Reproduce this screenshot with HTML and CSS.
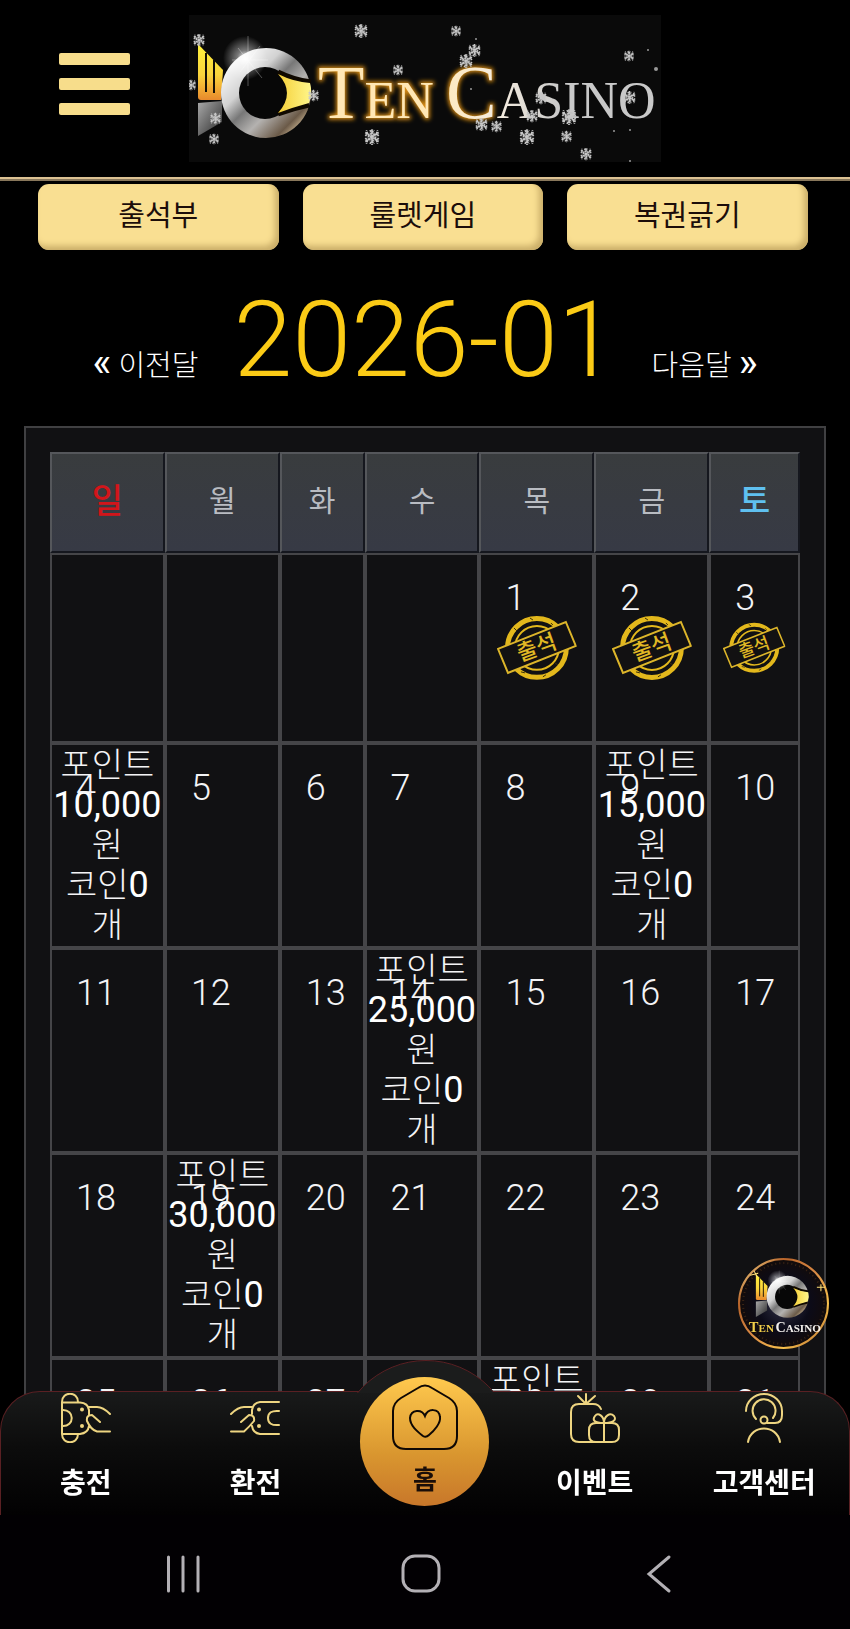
FILE: index.html
```html
<!DOCTYPE html>
<html lang="ko">
<head>
<meta charset="utf-8">
<meta name="viewport" content="width=device-width, initial-scale=1">
<title>TEN CASINO 출석부</title>
<link rel="stylesheet" href="styles.css">
</head>
<body>
<svg class="defs" aria-hidden="true">
  <defs>
    <linearGradient id="gold" x1="0" y1="0" x2="0" y2="1"><stop offset="0" stop-color="#fff23c"/><stop offset=".55" stop-color="#fbd53c"/><stop offset="1" stop-color="#e8892c"/></linearGradient>
    <linearGradient id="silver" x1="0" y1="0" x2="1" y2="1"><stop offset=".1" stop-color="#fff"/><stop offset=".35" stop-color="#d2d2d2"/><stop offset=".48" stop-color="#777"/><stop offset=".62" stop-color="#b4b2b0"/><stop offset=".8" stop-color="#6b5a48"/><stop offset=".92" stop-color="#f0d9b0"/></linearGradient>
    <linearGradient id="fin" x1="0" y1="0" x2="1" y2="1"><stop offset="0" stop-color="#aaa"/><stop offset="1" stop-color="#2a2a2a"/></linearGradient>
    <linearGradient id="eye" x1="0" y1="0" x2="1" y2="0"><stop offset="0" stop-color="#f5cf38"/><stop offset="1" stop-color="#fff68a"/></linearGradient>
    <linearGradient id="word" gradientUnits="userSpaceOnUse" x1="440" y1="0" x2="560" y2="0"><stop offset="0" stop-color="#ffe9bd"/><stop offset=".5" stop-color="#f4ece0"/><stop offset="1" stop-color="#c9c9c9"/></linearGradient>
    <radialGradient id="flare"><stop offset="0" stop-color="#fff"/><stop offset=".35" stop-color="#fff" stop-opacity=".45"/><stop offset="1" stop-color="#fff" stop-opacity="0"/></radialGradient>
    <radialGradient id="night"><stop offset="0" stop-color="#323248"/><stop offset=".6" stop-color="#0c0b18"/><stop offset="1" stop-color="#120b0a"/></radialGradient>
    <linearGradient id="rim" x1="0" y1="0" x2="1" y2="1"><stop offset="0" stop-color="#fff0a0"/><stop offset=".25" stop-color="#b8642a"/><stop offset=".5" stop-color="#d98a45"/><stop offset=".75" stop-color="#f8c04c"/><stop offset="1" stop-color="#a35528"/></linearGradient>
    <filter id="glow" x="-20%" y="-20%" width="140%" height="140%"><feGaussianBlur stdDeviation="2"/></filter>
    <symbol id="emblem" viewBox="190 36 130 110">
      <path d="M198 44L223 70L221 100H201Q198 100 198 97Z" fill="url(#gold)"/>
      <path d="M206 53V92M214 60V93" stroke="#151005" stroke-width="2"/>
      <path d="M198 103L222 101V122L198 136Z" fill="url(#fin)"/>
      <circle cx="266" cy="93" r="45" fill="url(#silver)"/>
      <circle cx="265" cy="93" r="26" fill="#070707"/>
      <path d="M278 72Q294 80 311 82M278 114Q294 108 309 105" fill="none" stroke="#100900" stroke-width="5"/>
      <path d="M278 74Q294 82 310 83Q313 94 309 103Q294 107 278 113Q296 93 278 74Z" fill="url(#eye)"/>
      <circle cx="245" cy="58" r="22" fill="url(#flare)"/>
      <path d="M248 36V86M232 60H268M238 48L262 78M260 46L240 72" stroke="#fff" stroke-width="1" opacity=".3"/>
    </symbol>
    <symbol id="flake" viewBox="-8 -8 16 16">
      <circle r="5" fill="#aaa" opacity=".3"/>
      <g fill="none" stroke="#c8c8c8" stroke-width="1.500"><path stroke-dasharray="2 .6" d="M0-7V7M-6-4L6 4M-6 4L6-4M-2-6L0-4L2-6M-2 6L0 4L2 6M-6-1L-4-3L-5-6M6 1L4 3L5 6M-6 1L-4 3L-5 6M6-1L4-3L5-6"/><circle r="3" stroke-dasharray="2 1"/></g>
    </symbol>
    <symbol id="stamp" viewBox="0 0 80 66">
      <g fill="none" stroke="#e3b81c">
        <circle cx="40" cy="33" r="29.5" stroke-width="5"/>
        <circle cx="40" cy="33" r="22" stroke-width="2"/>
        <path d="M17 13l3 3M33 3l3 2M61 50l-3-2M46 62l3-2M24 57l4 1M54 8l2 2" stroke="#3a2f0a" stroke-width="1"/>
      </g>
      <path d="M1 34L69 7L79 31L11 58Z" fill="#121112" stroke="#dcb52a" stroke-width="2"/>
      <text class="stamp-text" x="40" y="40" transform="rotate(-20 40 33)">출석</text>
    </symbol>
  </defs>
</svg>

<div class="app">
  <header class="header">
    <button class="menu" type="button" aria-label="메뉴"><span></span><span></span><span></span></button>
    <a class="logo" href="#" aria-label="TEN CASINO">
      <svg viewBox="189 15 472 147">
        <use href="#emblem" x="190" y="36" width="130" height="110"/>
        <g class="wordmark wordmark-glow" filter="url(#glow)" aria-hidden="true">
          <text x="318" y="118">T<tspan class="small">EN</tspan></text>
          <text x="446" y="118">C</text>
        </g>
        <g class="wordmark">
          <text x="318" y="118" fill="#ffe7b5">T<tspan class="small">EN</tspan></text>
          <text x="446" y="118" fill="url(#word)">C<tspan class="small">ASINO</tspan></text>
        </g>
        <g>
          <use href="#flake" x="192" y="33" width="14" height="14"/><use href="#flake" x="353" y="23" width="16" height="16"/>
          <use href="#flake" x="392" y="64" width="12" height="12"/><use href="#flake" x="307" y="89" width="13" height="13"/>
          <use href="#flake" x="185" y="79" width="12" height="12"/><use href="#flake" x="209" y="112" width="13" height="13"/>
          <use href="#flake" x="208" y="133" width="12" height="12"/><use href="#flake" x="363" y="128" width="18" height="18"/>
          <use href="#flake" x="450" y="25" width="12" height="12"/><use href="#flake" x="467" y="43" width="15" height="15"/>
          <use href="#flake" x="458" y="53" width="16" height="16"/><use href="#flake" x="534" y="91" width="14" height="14"/>
          <use href="#flake" x="525" y="109" width="14" height="14"/><use href="#flake" x="560" y="108" width="18" height="18"/>
          <use href="#flake" x="474" y="117" width="15" height="15"/><use href="#flake" x="490" y="120" width="13" height="13"/>
          <use href="#flake" x="518" y="128" width="18" height="18"/><use href="#flake" x="560" y="130" width="13" height="13"/>
          <use href="#flake" x="579" y="147" width="14" height="14"/><use href="#flake" x="623" y="50" width="12" height="12"/>
          <use href="#flake" x="622" y="90" width="15" height="15"/>
          <g fill="#999"><circle cx="648" cy="50" r="1"/><circle cx="656" cy="69" r="2"/><circle cx="614" cy="131" r="1"/><circle cx="630" cy="130" r="1"/><circle cx="476" cy="39" r="1"/><circle cx="471" cy="89" r="1"/><circle cx="630" cy="161" r="1"/></g>
        </g>
      </svg>
    </a>
  </header>

  <nav class="events">
    <button type="button">출석부</button>
    <button type="button">룰렛게임</button>
    <button type="button">복권긁기</button>
  </nav>

  <div class="month">
    <a href="#"><span class="chev">«</span> 이전달</a>
    <h1>2026-01</h1>
    <a href="#">다음달 <span class="chev">»</span></a>
  </div>

  <main class="panel">
    <table class="calendar">
      <colgroup><col><col><col class="narrow"><col><col><col><col class="last"></colgroup>
      <thead>
        <tr><th class="sun">일</th><th>월</th><th>화</th><th>수</th><th>목</th><th>금</th><th class="sat">토</th></tr>
      </thead>
      <tbody>
        <tr class="first">
          <td></td><td></td><td></td><td></td>
          <td><span class="day">1</span><svg class="stamp" viewBox="0 0 80 66"><use href="#stamp"/></svg></td>
          <td><span class="day">2</span><svg class="stamp" viewBox="0 0 80 66"><use href="#stamp"/></svg></td>
          <td><span class="day">3</span><svg class="stamp" viewBox="0 0 80 66"><use href="#stamp"/></svg></td>
        </tr>
        <tr>
          <td><span class="day">4</span><p class="reward">포인트<br><b>10,000</b><br>원<br>코인<b>0</b><br>개</p></td>
          <td><span class="day">5</span></td><td><span class="day">6</span></td><td><span class="day">7</span></td><td><span class="day">8</span></td>
          <td><span class="day">9</span><p class="reward">포인트<br><b>15,000</b><br>원<br>코인<b>0</b><br>개</p></td>
          <td><span class="day">10</span></td>
        </tr>
        <tr>
          <td><span class="day">11</span></td><td><span class="day">12</span></td><td><span class="day">13</span></td>
          <td><span class="day">14</span><p class="reward">포인트<br><b>25,000</b><br>원<br>코인<b>0</b><br>개</p></td>
          <td><span class="day">15</span></td><td><span class="day">16</span></td><td><span class="day">17</span></td>
        </tr>
        <tr>
          <td><span class="day">18</span></td>
          <td><span class="day">19</span><p class="reward">포인트<br><b>30,000</b><br>원<br>코인<b>0</b><br>개</p></td>
          <td><span class="day">20</span></td><td><span class="day">21</span></td><td><span class="day">22</span></td><td><span class="day">23</span></td><td><span class="day">24</span></td>
        </tr>
        <tr>
          <td><span class="day">25</span></td><td><span class="day">26</span></td><td><span class="day">27</span></td><td><span class="day">28</span></td>
          <td><span class="day">29</span><p class="reward">포인트</p></td>
          <td><span class="day">30</span></td><td><span class="day">31</span></td>
        </tr>
      </tbody>
    </table>
  </main>
</div>

<a class="badge" href="#" aria-label="TEN CASINO">
  <svg viewBox="0 0 90 90">
    <circle cx="45" cy="45" r="44" fill="url(#night)" stroke="url(#rim)" stroke-width="2"/>
    <circle cx="45" cy="45" r="40" fill="none" stroke="#7a4a20" stroke-width="2" stroke-dasharray="1 3" opacity=".4"/>
    <use href="#emblem" x="14" y="12" width="60" height="51"/>
    <path d="M82 26v7M78 29h8M16 13l3 6M12 17l8-2" stroke="#ffe27a" stroke-width="1"/>
    <text class="badge-text" x="11" y="73" fill="#f2cf4a">T<tspan class="badge-small">EN</tspan></text>
    <text class="badge-text" x="37" y="73" fill="#f4f1ee">C<tspan class="badge-small">ASINO</tspan></text>
  </svg>
</a>

<footer class="bottom">
  <nav class="tabs">
    <span class="hump"></span>
    <a href="#">
      <svg class="icon" viewBox="0 0 50 50"><path d="M1 9V41M1 9C1-2 17-2 17 9M1 41C1 52 17 52 17 41M1 9.500H19Q27 10 28 17V22M1 41H19Q27 40 28 33M1 17C14 16 14 34 1 33M28 14H36Q42 14 49 21M39 29L31 22Q25 22 26 28Q30 37 36 38.500H49"/><g class="dots"><circle cx="21" cy="16.500" r="2"/><circle cx="21" cy="33" r="2"/></g></svg>
      <span>충전</span>
    </a>
    <a href="#">
      <svg class="icon" viewBox="0 0 50 50"><path d="M49 9H30Q23 10 22 17V21M49 41H30Q23 40 22 33M49 18Q38 17 38 25Q38 33 49 32M1 21Q8 14 14 14H22M11 29L19 22Q25 22 24 28Q20 33 14 38.500H1"/><g class="dots"><circle cx="29" cy="16.500" r="2"/><circle cx="29" cy="33" r="2"/></g></svg>
      <span>환전</span>
    </a>
    <a class="home" href="#">
      <svg class="home-icon" viewBox="0 0 66 66"><path d="M26 4L9 14Q1 19 1 27V52Q1 65 14 65H52Q65 65 65 52V27Q65 19 57 14L40 4Q33-1 26 4Z"/><path d="M33 32C30 25 19 25 18 34C18 42 26 48 31 52Q34 54 37 51C42 47 49 39 48 33C47 24 36 24 33 32Z"/></svg>
      <span>홈</span>
    </a>
    <a href="#">
      <svg class="icon" viewBox="0 0 50 50"><path d="M31 16Q29 11 23 11H9Q1 11 1 19V41Q1 49 9 49H42Q49 49 49 42V37Q49 30 42 30H26Q19 30 19 37V42Q19 49 26 49M16 1V11M8 3L16 11L25 3M34 30V49M34 30C24 30 22 27 25 23C28 19 34 23 34 30C34 23 40 19 44 23C47 27 43 30 34 30"/></svg>
      <span>이벤트</span>
    </a>
    <a href="#">
      <svg class="icon" viewBox="0 0 50 50"><path d="M7 18A18 17 0 0 1 43 18V22Q43 30 36 30H28M17 26A11.500 11.500 0 1 1 34 25M9 49C12 31 38 31 41 49"/><circle cx="25" cy="27" r="3.500"/></svg>
      <span>고객센터</span>
    </a>
  </nav>
  <div class="system">
    <button type="button" aria-label="최근 앱"><svg viewBox="0 0 40 40"><path d="M3.500 3V37M18 3V37M33 3V37"/></svg></button>
    <button type="button" aria-label="홈"><svg viewBox="0 0 40 40"><rect x="2" y="2" width="36" height="35" rx="12"/></svg></button>
    <button type="button" aria-label="뒤로"><svg viewBox="0 0 40 40"><path d="M32 3L12 20L32 37"/></svg></button>
  </div>
</footer>
</body>
</html>
```
FILE: styles.css
```css
* {
  box-sizing: border-box;
}

body {
  margin: 0;
  background: #000;
  color: #f4f4f6;
  font-family: Roboto, "Noto Sans CJK KR", sans-serif;
  font-weight: 300;
}

a {
  color: inherit;
  text-decoration: none;
}

button {
  padding: 0;
  border: 0;
  background: none;
  color: inherit;
  font: inherit;
}

svg {
  display: block;
}

.defs {
  position: absolute;
  width: 0;
  height: 0;
}

.app {
  height: 100vh;
  overflow: hidden;
}

/* Header */
.header {
  display: flex;
  align-items: flex-start;
  gap: 59px;
  padding: 15px 59px;
  border-bottom: 4px ridge #dcc193;
}

.menu {
  display: flex;
  flex-direction: column;
  gap: 13px;
  width: 71px;
  margin-top: 38px;
}

.menu span {
  height: 12px;
  border-radius: 2px;
  background: #f7dd8b;
}

.logo {
  width: 472px;
  background: #0a0a0a;
}

.logo svg {
  width: 100%;
}

.wordmark {
  font-family: "Liberation Serif", serif;
  font-size: 76px;
  font-weight: 400;
}

.wordmark .small {
  font-size: 52px;
}

.wordmark-glow {
  fill: #d98d12;
  stroke: #d98d12;
  stroke-width: 3px;
}

/* Event buttons */
.events {
  display: grid;
  grid-template-columns: repeat(3, 1fr);
  gap: 24px;
  padding: 3px 5% 0 38px;
}

.events button {
  height: 66px;
  padding-bottom: 8px;
  border-radius: 11px;
  background: #f9df92;
  box-shadow: inset -4px -4px 6px #c9ad68;
  color: #1c0d0a;
  font-size: 29px;
  font-weight: 400;
}

/* Month switcher */
.month {
  display: flex;
  justify-content: center;
  align-items: baseline;
  gap: 35px;
  height: 176px;
  padding-top: 30px;
  color: #fff;
  font-size: 29px;
}

.month h1 {
  margin: 0;
  color: #fbcb16;
  font-size: 106px;
  font-weight: 300;
  line-height: 120px;
}

.chev {
  font-weight: 400;
  font-size: 40px;
  line-height: 40px;
}

/* Calendar */
.panel {
  margin: 0 24px;
  padding: 24px;
  border: 2px solid #404042;
  background: #111113;
}

.calendar {
  width: 100%;
  table-layout: fixed;
  border-collapse: separate;
  border-spacing: 0;
}

.calendar .narrow {
  width: 11.3%;
}

.calendar .last {
  width: 12.1%;
}

.calendar th {
  height: 101px;
  padding: 0 0 8px;
  border: 2px solid #55575b;
  border-right-color: #15171e;
  border-bottom-color: #15171e;
  background: linear-gradient(#393c3e, #373a45);
  color: #b9bcc2;
  font-size: 29px;
  font-weight: 400;
}

.calendar .sun {
  color: #d3151a;
  font-size: 34px;
  font-weight: 500;
}

.calendar .sat {
  color: #5fc0f0;
  font-size: 34px;
  font-weight: 500;
}

.calendar td {
  position: relative;
  height: 205px;
  padding: 0;
  border: 2px solid #454548;
  vertical-align: top;
}

.calendar .first td {
  height: 190px;
  vertical-align: middle;
}

.day {
  position: absolute;
  top: 23px;
  left: 24px;
  font-size: 36px;
  line-height: 40px;
}

.stamp {
  width: 72%;
  margin: 0 auto;
}

.stamp-text {
  fill: #e0b824;
  font-size: 22px;
  font-weight: 500;
  text-anchor: middle;
}

.reward {
  margin: 0;
  font-size: 34px;
  line-height: 40px;
  text-align: center;
}

.reward b {
  color: #fff;
  font-size: 36px;
  font-weight: 400;
  line-height: 36px;
}

/* Floating badge */
.badge {
  position: fixed;
  right: 21px;
  bottom: 280px;
  width: 91px;
}

.badge-text {
  font-family: "Liberation Serif", serif;
  font-size: 14px;
  font-weight: 700;
}

.badge-small {
  font-size: 11px;
}

/* Bottom bars */
.bottom {
  position: fixed;
  right: 0;
  bottom: 0;
  left: 0;
}

.tabs {
  position: relative;
  display: grid;
  grid-template-columns: repeat(5, 1fr);
  height: 124px;
  border: 1px solid #5a2023;
  border-bottom: 0;
  border-radius: 40px 40px 0 0;
  background: linear-gradient(#191a1a, #0c0c0c 45%, #020102);
}

.tabs a {
  position: relative;
  display: flex;
  flex-direction: column;
  align-items: center;
  gap: 21px;
  padding-top: 1px;
  color: #fff;
  font-size: 28px;
  font-weight: 700;
  line-height: 40px;
  white-space: nowrap;
}

.hump {
  position: absolute;
  bottom: 100%;
  left: 50%;
  width: 136px;
  height: 33px;
  margin: 0 0 -1px -68px;
  overflow: hidden;
}

.hump::before {
  content: "";
  position: absolute;
  top: 0;
  left: -20px;
  width: 176px;
  height: 176px;
  border: 1px solid #5a2023;
  border-radius: 50%;
  background: #1b1c1c;
}

.icon {
  width: 50px;
  height: 50px;
  fill: none;
  stroke: #eed581;
  stroke-width: 2;
  stroke-linecap: round;
  stroke-linejoin: round;
}

.icon .dots {
  fill: #eed581;
  stroke: none;
}

.tabs .home {
  justify-self: center;
  width: 129px;
  height: 129px;
  margin-top: -15px;
  padding-top: 7px;
  gap: 12px;
  border-radius: 50%;
  background: linear-gradient(#ffc94e, #d9962f 60%, #c8772a);
  color: #1a0d08;
  font-size: 26px;
  line-height: 36px;
}

.home-icon {
  width: 66px;
  height: 66px;
  fill: none;
  stroke: #0f0804;
  stroke-width: 2;
  overflow: visible;
}

.system {
  display: grid;
  grid-template-columns: repeat(3, 28%);
  justify-content: center;
  justify-items: center;
  align-items: center;
  height: 114px;
  padding: 4px 8px 0 0;
  background: #020003;
}

.system svg {
  width: 40px;
  height: 40px;
  fill: none;
  stroke: #b3b0b5;
  stroke-width: 3;
  stroke-linecap: round;
}
```
